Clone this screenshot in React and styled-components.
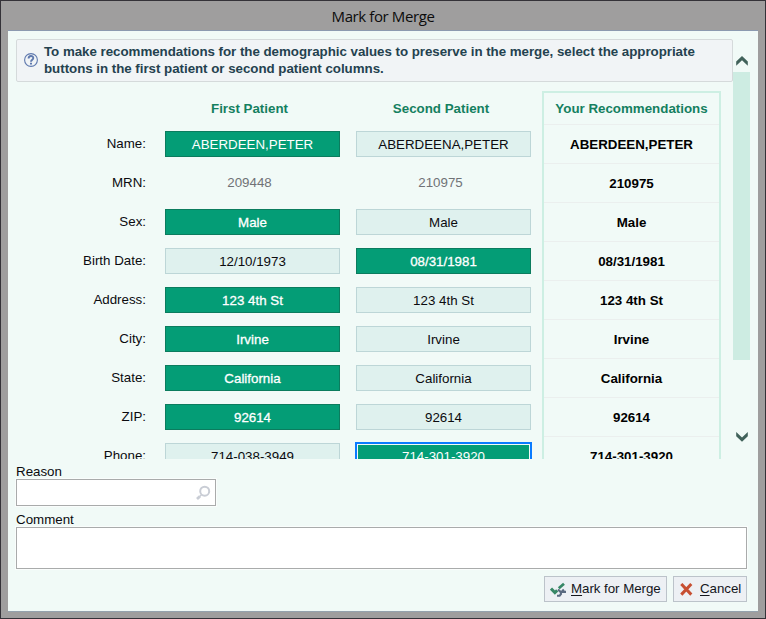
import React from "react";
import styled, { createGlobalStyle, css } from "styled-components";

const Global = createGlobalStyle`
  * { box-sizing: border-box; }
  html, body { margin: 0; padding: 0; }
  body { font-family: "Liberation Sans", Arial, sans-serif; font-size: 13.33px; color: #0b0b0f; overflow: hidden; }
`;

const Window = styled.div`
  width: 766px;
  height: 619px;
  border: 1px solid #343238;
  background: #9f9e9e;
  padding: 0 7px 6px 7px;
  display: flex;
  flex-direction: column;
`;

const TitleBar = styled.header`
  height: 29px;
  flex: none;
  display: flex;
  align-items: center;
  justify-content: center;
  font-family: "Open Sans", "Noto Sans", sans-serif;
  font-size: 15px;
  letter-spacing: -0.4px;
  color: #0c0c0c;
`;

const Body = styled.main`
  flex: 1;
  min-height: 0;
  border-top: 1px solid #8c9ab0;
  border-bottom: 1px solid #94a2ad;
  background: #f1faf7;
  padding: 8px 11px 8px 8px;
  display: flex;
  flex-direction: column;
`;

const ScrollRegion = styled.section`
  height: 420px;
  flex: none;
  display: flex;
  margin-right: -4px;
`;

const ScrollContent = styled.div`
  width: 717px;
  overflow: hidden;
  display: flex;
  flex-direction: column;
`;

const Notice = styled.div`
  height: 43px;
  flex: none;
  border: 1px solid #d5dadb;
  border-radius: 2px;
  background: #f1f4f6;
  display: flex;
  align-items: center;
  padding-left: 7px;
  color: #24424f;
  font-weight: bold;
  line-height: 17px;
  & > svg { margin-bottom: 2px; }
`;

const NoticeText = styled.p`
  margin: 0 0 1px 6px;
  letter-spacing: -0.03px;
  white-space: nowrap;
`;

const Table = styled.div`
  display: flex;
  flex: none;
  margin-top: 9px;
`;

const Column = styled.div`
  width: ${(p) => p.$width}px;
  margin-left: ${(p) => p.$gap || 0}px;
  padding-top: 2px;
  flex: none;
`;

const Heading = styled.div`
  height: 31px;
  display: flex;
  align-items: center;
  justify-content: center;
  padding-right: ${(p) => p.$shift || 0}px;
  font-weight: bold;
  color: #14805f;
`;

const Cell = styled.div`
  height: 39px;
  display: flex;
  align-items: center;
`;

const Label = styled(Cell)`
  justify-content: flex-end;
  padding-bottom: 1px;
`;

const PlainValue = styled.span`
  width: 100%;
  padding-right: 6px;
  padding-bottom: 1px;
  text-align: center;
  color: #707276;
`;

const Choice = styled.button`
  width: 175px;
  height: 26px;
  padding: 1px 0 0;
  font: inherit;
  color: #0b0b0f;
  background: #dff1ee;
  border: 1px solid #bdd6d7;
  ${(p) =>
    p.$selected &&
    css`
      color: #fff;
      background: #049d76;
      border-color: #0b7c5e;
      -webkit-text-stroke: ${p.$plain ? "0" : "0.3px #fff"};
    `}
  ${(p) =>
    p.$focused &&
    css`
      border-color: #0a7bff;
      outline: 1px solid #0a7bff;
      box-shadow: inset 0 0 0 1px #f1faf7;
    `}
`;

const Recommendations = styled.div`
  width: 179px;
  margin-left: 11px;
  flex: none;
  border: 2px solid #cdefe3;
`;

const Recommended = styled.div`
  height: 39px;
  border-top: 1px solid #ebefee;
  display: flex;
  align-items: center;
  justify-content: center;
  font-weight: bold;
  color: #000;
`;

const ScrollBar = styled.div`
  width: 17px;
  display: flex;
  flex-direction: column;
  align-items: center;
  padding: 17px 0;
`;

const Thumb = styled.div`
  width: 17px;
  height: 288px;
  margin: 6px 0 auto;
  background: #cdece2;
`;

const FieldLabel = styled.label`
  height: 17px;
  line-height: 17px;
  flex: none;
  margin-top: ${(p) => p.$gap || 0}px;
  padding-top: 4px;
`;

const Field = styled.div`
  width: ${(p) => p.$width}px;
  height: ${(p) => p.$height}px;
  margin-top: 3px;
  flex: none;
  border: 1px solid #a9abab;
  background: #fff;
  box-shadow: 0 0 0 1px #fafdfc;
  display: flex;
  align-items: center;
  justify-content: flex-end;
  padding-right: 4px;
`;

const Footer = styled.footer`
  display: flex;
  justify-content: flex-end;
  gap: 6px;
  margin-top: 7px;
`;

const Action = styled.button`
  width: ${(p) => p.$width}px;
  height: 26px;
  padding: 0 0 0 5px;
  display: flex;
  align-items: center;
  border: 1px solid #bcc3ca;
  background: #edf0f4;
  color: #14161c;
  font: inherit;
  white-space: nowrap;
  & > svg { flex: none; margin-top: 1px; }
  & > span { margin-left: ${(p) => p.$space}px; padding-bottom: 2px; letter-spacing: -0.05px; }
  u { text-underline-offset: 2px; }
`;

const HelpIcon = () => (
  <svg width="14" height="14" viewBox="0 0 14 14" fill="none" stroke="#5f79ae">
    <circle cx="7" cy="7" r="6.4" strokeWidth="1.1" />
    <path d="M4.6 5.4C4.6 2.3 9.3 2.3 9.3 5.1C9.3 6.7 7 6.8 7 8.7" strokeWidth="1.9" />
    <path d="M7 9.7V11.5" strokeWidth="2" />
  </svg>
);

const Chevron = ({ down }) => (
  <svg width="12" height="10" viewBox="0 0 12 10" fill="#41625a">
    <path d={down ? "M0.2 0V4.2L6 9.8L11.8 4.2V0L6 5.6Z" : "M0.2 9.8V5.6L6 0L11.8 5.6V9.8L6 4.2Z"} />
  </svg>
);

const SearchIcon = () => (
  <svg width="16" height="16" viewBox="0 0 16 16" fill="none" stroke="#c9cdd5">
    <circle cx="9.7" cy="6.2" r="4.5" strokeWidth="2" />
    <path d="M6.5 9.8L4.8 11.5" strokeWidth="1.4" />
    <path d="M5 11.2L2 14" strokeWidth="2.8" />
  </svg>
);

const MergeIcon = () => (
  <svg width="16" height="16" viewBox="0 0 16 16" fill="none">
    <path d="M1 6.6L4.9 10.6L7.2 8.4" stroke="#378766" strokeWidth="3" />
    <path d="M8.8 6.2L14 1.8" stroke="#378766" strokeWidth="2.8" />
    <path d="M8 7.5L10.6 9.9L11 12L9.6 13.8H7M10.6 9.9H16M11.6 9.9L13.8 7.6" stroke="#5a6a80" strokeWidth="2.1" />
  </svg>
);

const CloseIcon = () => (
  <svg width="15" height="14" viewBox="0 0 15 14" stroke="#c74f32" strokeWidth="3">
    <path d="M2.3 1L12.3 11.6M12.3 1L2.3 11.6" />
  </svg>
);

const rows = [
  { label: "Name", first: "ABERDEEN,PETER", second: "ABERDEENA,PETER", pick: 1, plain: true },
  { label: "MRN", first: "209448", second: "210975", pick: 2, fixed: true },
  { label: "Sex", first: "Male", second: "Male", pick: 1 },
  { label: "Birth Date", first: "12/10/1973", second: "08/31/1981", pick: 2 },
  { label: "Address", first: "123 4th St", second: "123 4th St", pick: 1 },
  { label: "City", first: "Irvine", second: "Irvine", pick: 1 },
  { label: "State", first: "California", second: "California", pick: 1 },
  { label: "ZIP", first: "92614", second: "92614", pick: 1 },
  { label: "Phone", first: "714-038-3949", second: "714-301-3920", pick: 2, focused: true, plain: true },
];

function PatientColumn({ title, field, index, gap, shift }) {
  return (
    <Column $width={175} $gap={gap}>
      <Heading $shift={shift}>{title}</Heading>
      {rows.map((row) => (
        <Cell key={row.label}>
          {row.fixed ? (
            <PlainValue>{row[field]}</PlainValue>
          ) : (
            <Choice
              $selected={row.pick === index}
              $focused={row.focused && row.pick === index}
              $plain={row.plain}
            >
              {row[field]}
            </Choice>
          )}
        </Cell>
      ))}
    </Column>
  );
}

export default function App() {
  return (
    <>
      <Global />
      <Window>
        <TitleBar>Mark for Merge</TitleBar>
        <Body>
          <ScrollRegion>
            <ScrollContent>
              <Notice>
                <HelpIcon />
                <NoticeText>
                  To make recommendations for the demographic values to preserve in the merge, select the appropriate
                  <br />
                  buttons in the first patient or second patient columns.
                </NoticeText>
              </Notice>
              <Table>
                <Column $width={130}>
                  <Heading />
                  {rows.map((row) => (
                    <Label key={row.label}>{row.label}:</Label>
                  ))}
                </Column>
                <PatientColumn title="First Patient" field="first" index={1} gap={19} shift={6} />
                <PatientColumn title="Second Patient" field="second" index={2} gap={16} shift={5} />
                <Recommendations>
                  <Heading>Your Recommendations</Heading>
                  {rows.map((row) => (
                    <Recommended key={row.label}>{row.pick === 1 ? row.first : row.second}</Recommended>
                  ))}
                </Recommendations>
              </Table>
            </ScrollContent>
            <ScrollBar>
              <Chevron />
              <Thumb />
              <Chevron down />
            </ScrollBar>
          </ScrollRegion>
          <FieldLabel>Reason</FieldLabel>
          <Field $width={200} $height={27}>
            <SearchIcon />
          </Field>
          <FieldLabel $gap={1}>Comment</FieldLabel>
          <Field $width={731} $height={42} />
          <Footer>
            <Action $width={123} $space={5}>
              <MergeIcon />
              <span><u>M</u>ark for Merge</span>
            </Action>
            <Action $width={74} $space={6}>
              <CloseIcon />
              <span><u>C</u>ancel</span>
            </Action>
          </Footer>
        </Body>
      </Window>
    </>
  );
}
